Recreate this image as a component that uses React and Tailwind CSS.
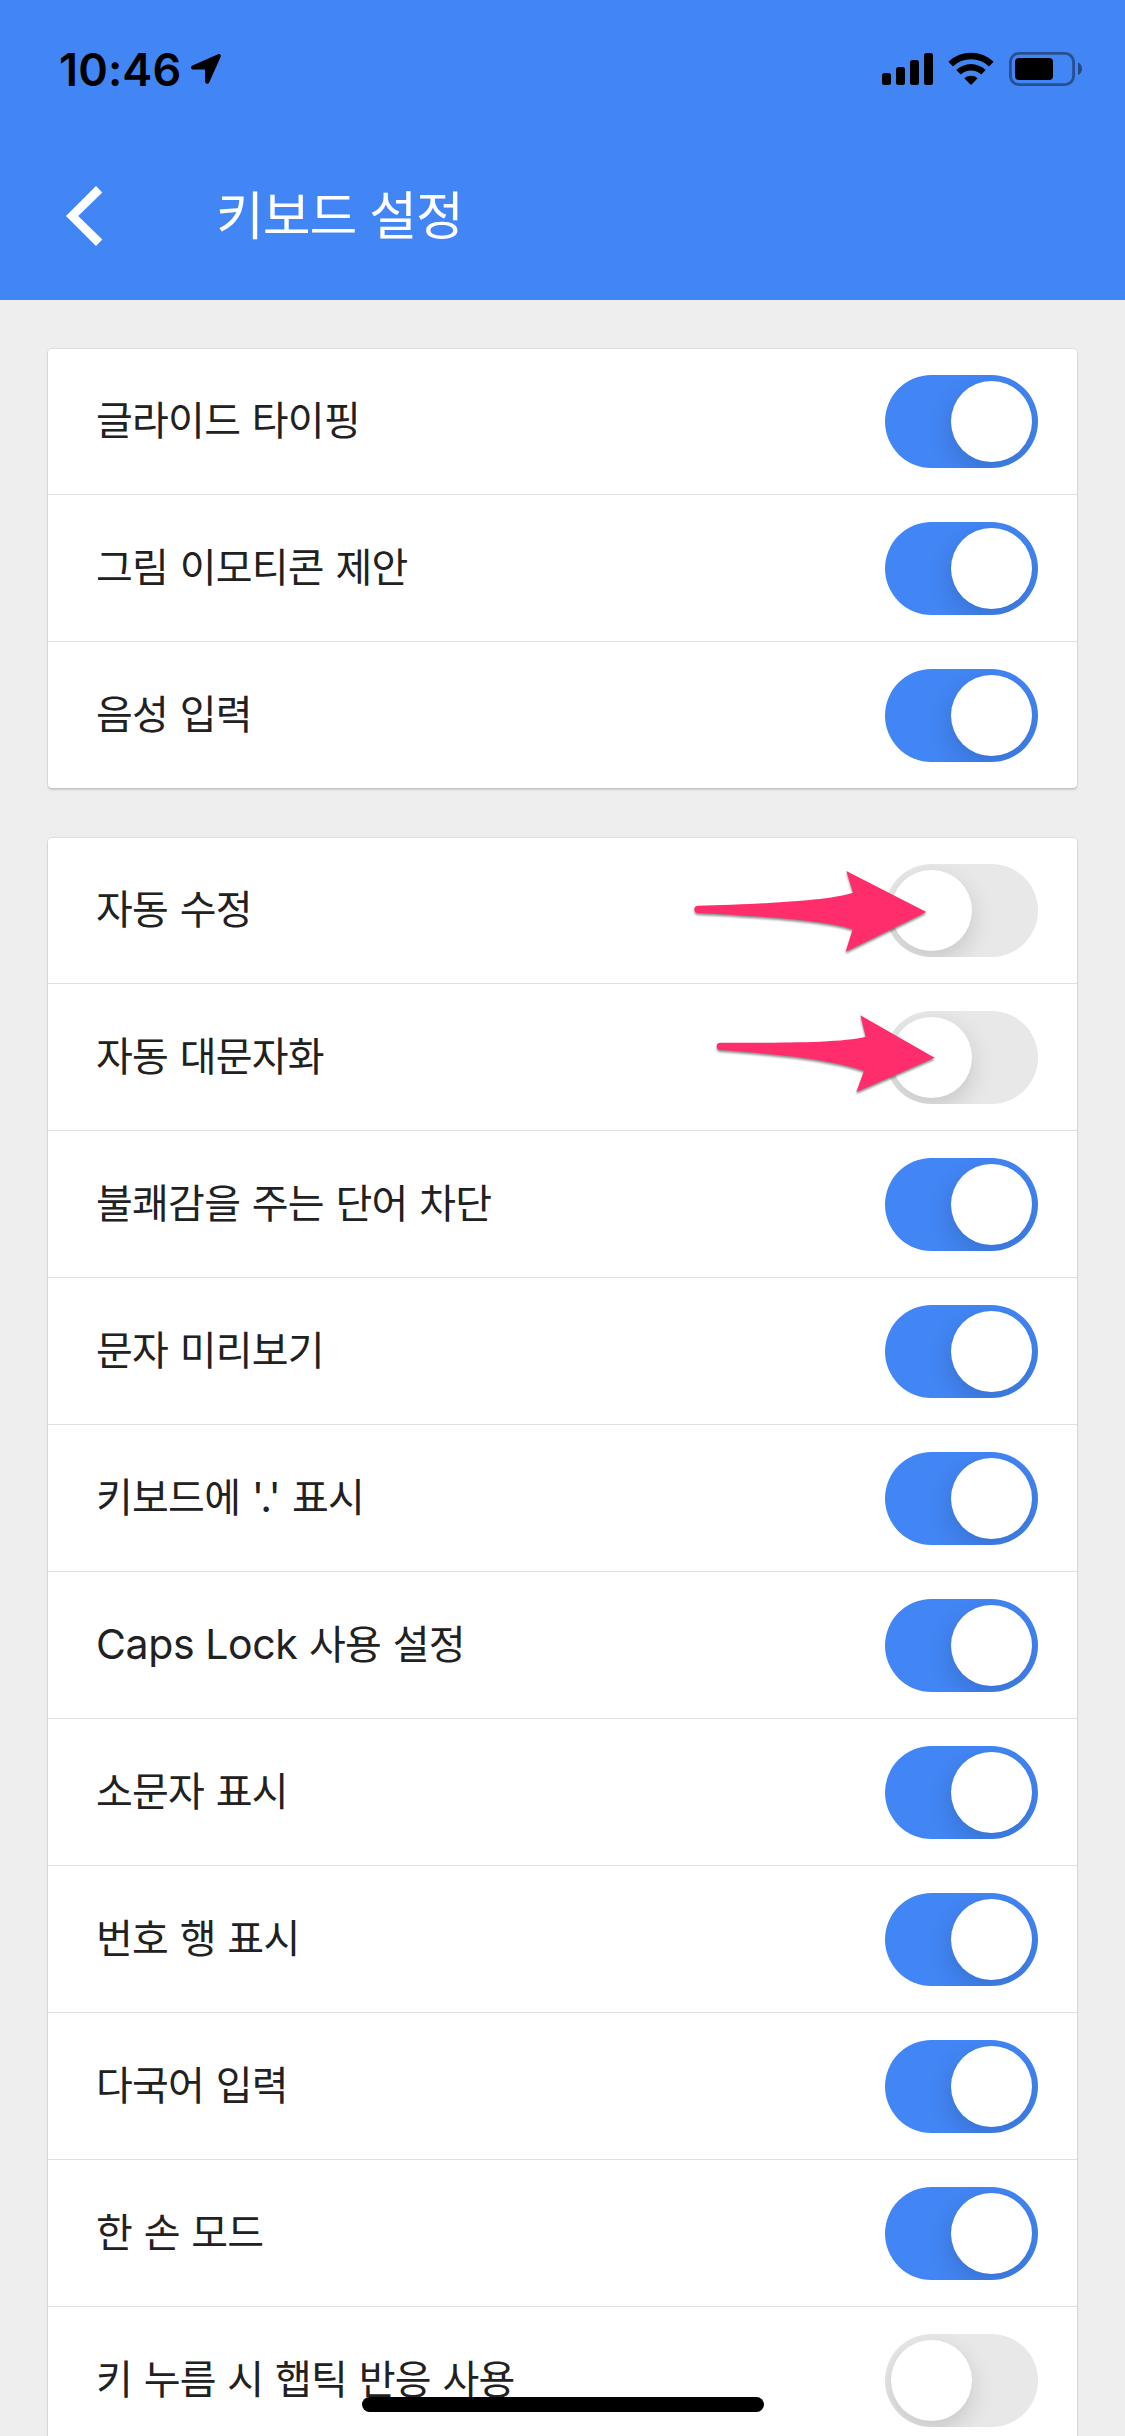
import { useState, Fragment } from "react";

const groups = [
  [
    { id: "glide", label: "글라이드 타이핑", on: true },
    { id: "emoji", label: "그림 이모티콘 제안", on: true },
    { id: "voice", label: "음성 입력", on: true },
  ],
  [
    { id: "autocorrect", label: "자동 수정", on: false },
    { id: "autocaps", label: "자동 대문자화", on: false },
    { id: "offensive", label: "불쾌감을 주는 단어 차단", on: true },
    { id: "preview", label: "문자 미리보기", on: true },
    { id: "period", label: "키보드에 '.' 표시", on: true },
    { id: "capslock", label: "Caps Lock 사용 설정", on: true },
    { id: "lowercase", label: "소문자 표시", on: true },
    { id: "numberrow", label: "번호 행 표시", on: true },
    { id: "multilang", label: "다국어 입력", on: true },
    { id: "onehand", label: "한 손 모드", on: true },
    { id: "haptic", label: "키 누름 시 햅틱 반응 사용", on: false },
  ],
];

// Latin runs are set in Inter, which needs its own tracking
function Label({ text }) {
  const parts = text.split(/(Caps Lock|'\.')/);
  return (
    <span className="pb-[18px] text-[40px] leading-[64px] tracking-[-0.75px] [word-spacing:3.4px] whitespace-pre text-[#212121]">
      {parts.map((part, i) =>
        i % 2 === 1 ? (
          <span key={i} className="font-['Inter'] text-[41px] leading-none tracking-[-0.4px] [word-spacing:0px]">{part}</span>
        ) : (
          <Fragment key={i}>{part}</Fragment>
        )
      )}
    </span>
  );
}

function Toggle({ on, onClick }) {
  return (
    <button
      onClick={onClick}
      className={`flex h-[93px] w-[153px] shrink-0 overflow-hidden rounded-full p-[6px] ${
        on ? "justify-end bg-[#4285f4]" : "justify-start bg-[#e8e8e8]"
      }`}
    >
      <span className="size-[81px] rounded-full bg-white shadow-[0_9px_24px_rgba(0,0,0,0.15)]" />
    </button>
  );
}

function StatusBar() {
  return (
    <div className="flex h-[138px] items-center justify-between pr-[43px] pl-[59px]">
      <div className="flex items-center gap-[10px]">
        <span className="font-['Inter'] text-[45px] leading-none font-semibold tracking-[0.1px] text-black">10:46</span>
        <svg className="h-[30px] w-[30px]" viewBox="0 0 30 30">
          <path d="M27 .3C29 -.4 30.4 1 29.6 3L18.3 28.2C17.1 30.7 14.1 30.1 14.1 27.3V16.4Q14.1 15.6 13.3 15.6H2.3C-.4 15.6 -.9 12.6 1.5 11.5Z" fill="#000" />
        </svg>
      </div>
      <svg className="h-[34px] w-[200px]" viewBox="882 52 200 34">
        <rect x="882" y="73" width="9" height="12" rx="2.5" />
        <rect x="896" y="67" width="9" height="18" rx="2.5" />
        <rect x="910" y="60" width="9" height="25" rx="2.5" />
        <rect x="924" y="53" width="9" height="32" rx="2.5" />
        <path d="M948.4 61.8A32.5 32.5 0 0 1 993.6 61.8L989 66.4A26 26 0 0 0 953 66.4Z" />
        <path d="M956.2 70A21.5 21.5 0 0 1 985.8 70L981.2 74.6A15 15 0 0 0 960.8 74.6Z" />
        <path d="M964.3 78.2A10.5 10.5 0 0 1 977.7 78.2L971 85Z" />
        <rect x="1010.4" y="53.4" width="63.2" height="31.2" rx="8.5" fill="none" stroke="#000" strokeOpacity=".4" strokeWidth="2.8" />
        <rect x="1015" y="58" width="38" height="22" rx="4" />
        <path d="M1078 62.5C1083.3 64.6 1083.3 72.9 1078 75Z" fillOpacity=".45" />
      </svg>
    </div>
  );
}

export default function App() {
  const [settings, setSettings] = useState(() =>
    Object.fromEntries(groups.flat().map((item) => [item.id, item.on]))
  );

  const handleToggle = (id) => {
    setSettings((prev) => ({ ...prev, [id]: !prev[id] }));
  };

  return (
    <div className="relative h-[2436px] w-[1125px] overflow-hidden bg-[#eeeeee] font-['Noto_Sans_CJK_KR',sans-serif]">
      {/* Header */}
      <header className="h-[300px] bg-[#4285f4]">
        <StatusBar />
        <div className="flex h-[156px] items-center pl-[66px]">
          <svg className="h-[60px] w-[37px]" viewBox="0 0 37 60">
            <path d="M30 0L36.3 6.5L12.2 30L36.3 53.5L30 60L0 30Z" fill="#fff" />
          </svg>
          <h1 className="mb-[6px] ml-[113px] text-[52px] leading-[80px] tracking-[-1.1px] text-white [word-spacing:2.5px]">키보드 설정</h1>
        </div>
      </header>

      {/* Settings cards */}
      <main className="flex flex-col gap-[50px] px-[48px] pt-[49px]">
        {groups.map((items, index) => (
          <section
            key={index}
            className="rounded-[4px] bg-white shadow-[0_0_0_1px_rgba(0,0,0,0.04),0_2px_2px_rgba(0,0,0,0.14),0_0_3px_rgba(0,0,0,0.06)]"
          >
            {items.map((item) => (
              <div
                key={item.id}
                className="flex h-[147px] items-end justify-between border-b border-[#e0e0e0] pr-[39px] pb-[26px] pl-[48px] first:h-[146px] last:h-[146px] last:border-b-0"
              >
                <Label text={item.label} />
                <Toggle on={settings[item.id]} onClick={() => handleToggle(item.id)} />
              </div>
            ))}
          </section>
        ))}
      </main>

      {/* Arrows over the two disabled switches */}
      <svg
        className="pointer-events-none absolute top-[840px] left-[670px] h-[280px] w-[400px] drop-shadow-[0_2px_1px_rgba(0,0,0,0.45)]"
        viewBox="0 0 1200 840"
      >
        <path d="M84 197C240 193 470 184 549 158L529 93L769 216L527 335L548 268C460 238 230 227 84 219A11 11 0 0 1 84 197Z" fill="#ff2d6c" />
        <path d="M151 608C300 608 510 610 587 590L571 526L794 653L559 756L582 693C480 656 300 641 151 630A11 11 0 0 1 151 608Z" fill="#ff2d6c" />
      </svg>

      {/* Home indicator */}
      <div className="absolute top-[2397px] left-[362px] h-[15px] w-[402px] rounded-full bg-black" />
    </div>
  );
}
